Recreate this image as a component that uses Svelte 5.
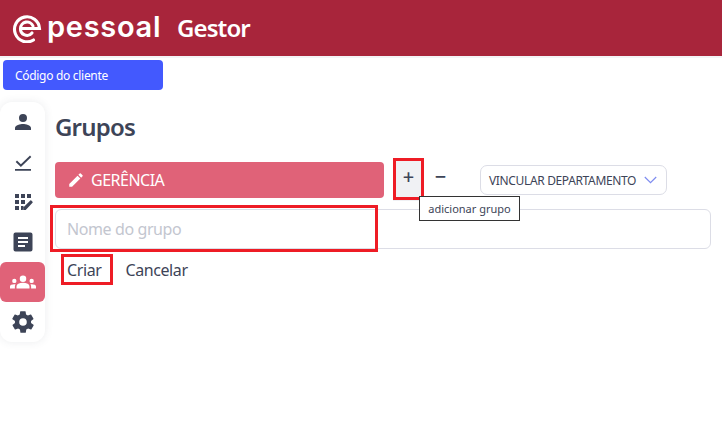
<script lang="ts">
	const menu = [
		{ id: 'user', active: false },
		{ id: 'check', active: false },
		{ id: 'grid', active: false },
		{ id: 'doc', active: false },
		{ id: 'groups', active: true },
		{ id: 'gear', active: false }
	];
</script>

<div class="page">
	<header class="topbar">
		<svg class="logo-mark" width="30" height="30" viewBox="0 0 30 30" fill="none" stroke="#fff" stroke-width="3.100" stroke-linecap="round">
			<path d="M21.500 27A12.500 12.500 0 1 1 27.500 15.500H10"/>
			<path d="M21 13A6.500 6.500 0 0 0 8.500 15.500a6.500 6.500 0 0 0 11.500 4.500"/>
		</svg>
		<span class="wordmark">pessoal</span>
		<span class="product">Gestor</span>
	</header>

	<div class="client-row">
		<button class="client-btn">Código do cliente</button>
	</div>

	<div class="body">
		<nav class="sidebar">
			{#each menu as item}
				<div class="nav-item" class:active={item.active}>
					{#if item.id === 'user'}
						<svg width="24" height="24" viewBox="0 0 24 24"><path d="M12 12a4 4 0 1 0 0-8 4 4 0 0 0 0 8zm0 2c-2.700 0-8 1.300-8 4v2h16v-2c0-2.700-5.300-4-8-4z"/></svg>
					{:else if item.id === 'check'}
						<svg class="check" width="24" height="24" viewBox="0 0 24 24"><path d="M19 5.600 9.900 14.300 6 10.600 4.700 11.900l5.200 5L20.300 7zM4 19h16v1.800H4z"/></svg>
					{:else if item.id === 'grid'}
						<svg width="24" height="24" viewBox="0 0 24 24"><path d="M4 4h4v4H4zm6 0h4v4h-4zm6 0h4v4h-4zM4 10h4v4H4zm6 0h4v4h-4zM4 16h4v4H4zm6 0h2.500v3L11.500 20H10zm11.500-4.300-1.200-1.200a.7.700 0 0 0-1 0l-7 7V20h2.400l6.800-7.300a.7.700 0 0 0 0-1z"/></svg>
					{:else if item.id === 'doc'}
						<svg width="24" height="24" viewBox="0 0 24 24"><path d="M19.500 2.500h-15a2 2 0 0 0-2 2v15a2 2 0 0 0 2 2h15a2 2 0 0 0 2-2v-15a2 2 0 0 0-2-2zM14 17H7v-2h7zm3-4H7v-2h10zm0-4H7V7h10z"/></svg>
					{:else if item.id === 'groups'}
						<svg width="26" height="26" viewBox="0 0 24 24"><path d="M12 12.700c1.600 0 3.100.4 4.300.9 1.100.5 1.700 1.600 1.700 2.800V18H6v-1.600c0-1.200.6-2.300 1.700-2.800 1.200-.5 2.600-.9 4.300-.9zM4 13a2 2 0 1 0 0-4 2 2 0 0 0 0 4zm1.100 1.100A7 7 0 0 0 4 14c-1 0-1.900.2-2.800.6-.7.3-1.200 1-1.200 1.800V18h4.500v-1.600c0-.8.200-1.600.6-2.300zM20 13a2 2 0 1 0 0-4 2 2 0 0 0 0 4zm4 3.400c0-.8-.5-1.500-1.200-1.800A7 7 0 0 0 20 14c-.4 0-.8 0-1.100.1.400.7.600 1.500.6 2.300V18H24zM12 6a3 3 0 1 1 0 6 3 3 0 0 1 0-6z"/></svg>
					{:else}
						<svg width="26" height="26" viewBox="0 0 24 24"><path d="M19.400 13a7.500 7.500 0 0 0 0-2l2.100-1.600a.5.500 0 0 0 .1-.6l-2-3.500a.5.500 0 0 0-.6-.2l-2.500 1a7.300 7.300 0 0 0-1.700-1l-.4-2.700a.5.500 0 0 0-.5-.4h-4a.5.500 0 0 0-.5.400l-.4 2.700a7.700 7.700 0 0 0-1.700 1l-2.500-1a.5.500 0 0 0-.6.200l-2 3.500a.5.500 0 0 0 .1.600L4.600 11a7.900 7.900 0 0 0 0 2l-2.100 1.600a.5.500 0 0 0-.1.600l2 3.500c.1.200.4.300.6.200l2.500-1c.5.400 1.100.7 1.700 1l.4 2.700c0 .2.200.4.500.4h4c.2 0 .5-.2.500-.4l.4-2.700a7.300 7.300 0 0 0 1.700-1l2.500 1c.2.100.5 0 .6-.2l2-3.500a.5.500 0 0 0-.1-.6zM12 15.500a3.500 3.500 0 1 1 0-7 3.500 3.500 0 0 1 0 7z"/></svg>
					{/if}
				</div>
			{/each}
		</nav>

		<main class="content">
			<h1>Grupos</h1>

			<div class="group-row">
				<div class="group-bar">
					<svg width="18" height="18" viewBox="0 0 24 24" fill="#fff"><path d="M3 17.250V21h3.750L17.800 9.940l-3.750-3.750zM20.700 7.040a1 1 0 0 0 0-1.410l-2.340-2.340a1 1 0 0 0-1.410 0l-1.830 1.830 3.750 3.750z"/></svg>
					<span>GERÊNCIA</span>
				</div>
				<button class="icon-btn plus">+</button>
				<button class="icon-btn minus">−</button>
				<div class="select">
					<span>VINCULAR DEPARTAMENTO</span>
					<svg width="13" height="8" viewBox="0 0 13 8" fill="none" stroke="#7e8cf0" stroke-width="1.200"><path d="M.8 1l5.700 5.700L12.200 1"/></svg>
				</div>
				<div class="tooltip">adicionar grupo</div>
				<div class="mark mark-plus"></div>
			</div>

			<div class="name-field">
				<input placeholder="Nome do grupo" />
				<div class="mark mark-input"></div>
			</div>

			<div class="actions">
				<span class="action criar">Criar<span class="mark mark-criar"></span></span>
				<span class="action">Cancelar</span>
			</div>
		</main>
	</div>
</div>

<style>
	:global(body) {
		margin: 0;
		background: #fff;
	}

	.page {
		width: 722px;
		height: 444px;
		overflow: hidden;
		font-family: 'Noto Sans', 'Open Sans', sans-serif;
		color: #3d4457;
	}

	.topbar {
		height: 56px;
		background: #a8253b;
		display: flex;
		align-items: center;
		padding-left: 12px;
		color: #fff;
		box-sizing: border-box;
	}

	.logo-mark {
		flex: none;
	}

	.wordmark {
		font-family: 'Inter', sans-serif;
		font-size: 29px;
		font-weight: 600;
		letter-spacing: 0.7px;
		margin: -3px 0 0 5px;
		width: 130px;
		flex: none;
	}

	.product {
		font-size: 24px;
		font-weight: 600;
		margin-top: -1px;
		letter-spacing: -0.9px;
	}

	.client-row {
		padding: 4px 0 0 3px;
		height: 42px;
		box-sizing: border-box;
		background: linear-gradient(#f3f4f6 2px, #fff 2px);
	}

	.client-btn {
		width: 160px;
		height: 30px;
		border: 0;
		border-radius: 4px;
		background: #4359fe;
		color: #fff;
		font: 400 12px 'Noto Sans', sans-serif;
		letter-spacing: -0.3px;
		text-align: left;
		padding: 0 0 0 12px;
	}

	.body {
		display: flex;
		margin-top: 4px;
	}

	.sidebar {
		width: 45px;
		height: 240px;
		border-radius: 12px;
		background: #fff;
		box-shadow: 0 0 8px rgba(60, 70, 90, 0.1);
		flex: none;
	}

	.nav-item {
		height: 40px;
		display: flex;
		align-items: center;
		justify-content: center;
		fill: #3d4457;
	}

	.nav-item.active {
		background: #e06278;
		border-radius: 6px;
		fill: #fff;
	}

	.check {
		margin-top: -1px;
	}

	.content {
		margin-left: 10px;
		width: 656px;
		position: relative;
	}

	h1 {
		margin: 8px 0 0;
		font-size: 24px;
		line-height: 34px;
		font-weight: 600;
		letter-spacing: -0.8px;
	}

	.group-row {
		position: relative;
		display: flex;
		align-items: center;
		margin-top: 18px;
		height: 36px;
	}

	.group-bar {
		width: 329px;
		height: 36px;
		background: #e06278;
		border-radius: 4px;
		display: flex;
		align-items: center;
		gap: 6px;
		padding-left: 12px;
		box-sizing: border-box;
		color: #fff;
		font-size: 16px;
		letter-spacing: -0.5px;
		flex: none;
	}

	.icon-btn {
		border: 0;
		background: none;
		padding: 0 0 7px;
		color: #3d4457;
		font: 500 20px 'Noto Sans', sans-serif;
		flex: none;
	}

	.plus {
		width: 31px;
		height: 41px;
		margin-left: 9px;
		background: #f0f1f4;
	}

	.minus {
		width: 31px;
		height: 36px;
		margin-left: 1px;
		padding-bottom: 7px;
	}

	.select {
		width: 187px;
		height: 30px;
		margin-left: 24px;
		border: 1px solid #dcdde6;
		border-radius: 7px;
		box-sizing: border-box;
		display: flex;
		align-items: center;
		justify-content: space-between;
		padding: 0 9px 0 8px;
		font-size: 12px;
		letter-spacing: -0.35px;
		white-space: nowrap;
		flex: none;
	}

	.tooltip {
		position: absolute;
		left: 364px;
		top: 34px;
		width: 101px;
		height: 25px;
		box-sizing: border-box;
		border: 1px solid #333;
		background: #fff;
		font-size: 11px;
		line-height: 23px;
		text-align: center;
		z-index: 2;
	}

	.name-field {
		position: relative;
		margin-top: 11px;
	}

	input {
		display: block;
		width: 656px;
		height: 40px;
		box-sizing: border-box;
		border: 1px solid #dcdde6;
		border-radius: 6px;
		padding: 0 11px;
		font: 16px 'Noto Sans', sans-serif;
		letter-spacing: -0.4px;
		outline: none;
	}

	input::placeholder {
		color: #c3c6cf;
		opacity: 1;
	}

	.actions {
		display: flex;
		gap: 24px;
		margin-top: 9px;
		padding-left: 12px;
		font-size: 16px;
		line-height: 24px;
		letter-spacing: -0.4px;
	}

	.action {
		position: relative;
	}

	.mark {
		position: absolute;
		border: 3px solid #ee1c25;
		box-sizing: border-box;
		pointer-events: none;
	}

	.mark-plus {
		left: 338px;
		top: -4px;
		width: 31px;
		height: 42px;
	}

	.mark-input {
		left: -5px;
		top: -4px;
		width: 328px;
		height: 47px;
	}

	.mark-criar {
		left: -6px;
		top: -4px;
		width: 52px;
		height: 31px;
	}
</style>
